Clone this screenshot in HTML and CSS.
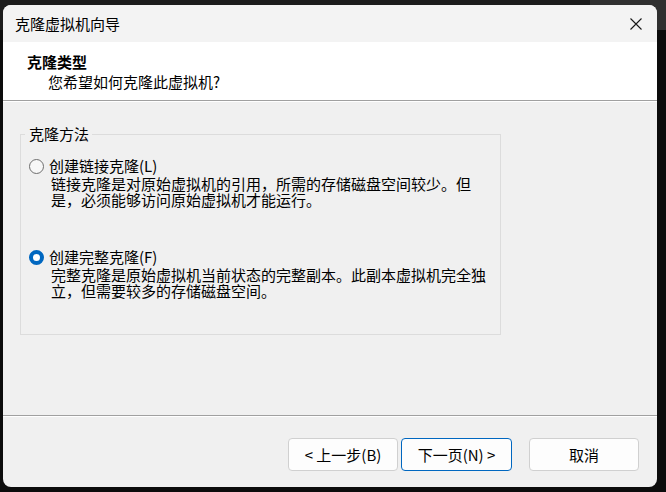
FILE: index.html
```html
<!DOCTYPE html>
<html lang="zh-CN">
<head>
<meta charset="utf-8">
<title>克隆虚拟机向导</title>
<link rel="stylesheet" href="styles.css">
</head>
<body>
<div class="window">
  <div class="titlebar">
    <span class="title">克隆虚拟机向导</span>
    <svg class="close" width="12" height="12" viewBox="0 0 12 12"><path d="M0.5 0.5 L11.5 11.5 M11.5 0.5 L0.5 11.5" stroke="#1a1a1a" stroke-width="1.1" fill="none"/></svg>
  </div>
  <div class="header">
    <div class="h-title">克隆类型</div>
    <div class="h-sub">您希望如何克隆此虚拟机?</div>
  </div>
  <div class="content">
    <fieldset class="group">
      <legend class="legend">克隆方法</legend>
      <div class="options">
        <div class="option">
          <div class="opt-row"><span class="radio"></span><span class="opt-label">创建链接克隆(L)</span></div>
          <p class="desc">链接克隆是对原始虚拟机的引用，所需的存储磁盘空间较少。但是，必须能够访问原始虚拟机才能运行。</p>
        </div>
        <div class="option option-second">
          <div class="opt-row"><span class="radio radio-on"></span><span class="opt-label">创建完整克隆(F)</span></div>
          <p class="desc">完整克隆是原始虚拟机当前状态的完整副本。此副本虚拟机完全独立，但需要较多的存储磁盘空间。</p>
        </div>
      </div>
    </fieldset>
  </div>
  <div class="footer">
    <button class="btn">&lt; 上一步(B)</button>
    <button class="btn btn-primary">下一页(N) &gt;</button>
    <button class="btn btn-cancel">取消</button>
  </div>
</div>
</body>
</html>
```
FILE: styles.css
```css
* { box-sizing: border-box; }
html, body { margin: 0; padding: 0; }
body {
  width: 666px;
  height: 492px;
  overflow: hidden;
  background: linear-gradient(to right, #1c1c1c 590px, #303030 590px) top left / 100% 30px no-repeat, #0c0c0c;
  font-family: "Noto Sans CJK SC", "Noto Sans", sans-serif;
  color: #000;
  padding: 5px 0 0 3px;
}
.window {
  width: 654px;
  height: 482px;
  border-radius: 8px;
  overflow: hidden;
  background: #f0f0f0;
  display: flex;
  flex-direction: column;
}
.titlebar {
  height: 37px;
  background: #f3f3f3;
  display: flex;
  align-items: center;
  padding: 0 15px 0 12px;
}
.title {
  font-size: 15px;
  line-height: 20px;
}
.close { margin-left: auto; }
.header {
  height: 59px;
  background: #fff;
  border-bottom: 1px solid #a0a0a0;
  padding: 10px 0 0 24px;
}
.h-title {
  font-size: 15px;
  line-height: 20px;
  font-weight: 700;
}
.h-sub {
  font-size: 15px;
  line-height: 20px;
  margin-left: 21px;
}
.content {
  flex: 1;
  border-top: 1px solid #ffffff;
  padding: 24px 0 0 17px;
}
.group {
  margin: 0;
  width: 481px;
  height: 209px;
  border: 1px solid #dcdcdc;
  padding: 15px 0 0 4px;
}
.legend {
  padding: 0 3px 0 4px;
  font-size: 15px;
  line-height: 16px;
}
.options { margin-left: 4px; }
.opt-row {
  display: flex;
  align-items: center;
  height: 18px;
  font-size: 15px;
  line-height: 18px;
}
.radio {
  width: 15px;
  height: 15px;
  border-radius: 50%;
  border: 1px solid #6e6e6e;
  background: #f7f7f7;
  margin-right: 5px;
  flex: none;
}
.radio-on {
  border: 4px solid #0067c0;
  background: #fff;
}
.desc {
  margin: 1px 0 0 22px;
  width: 440px;
  font-size: 15px;
  line-height: 16px;
}
.option-second { margin-top: 40px; }
.footer {
  height: 72px;
  border-top: 1px solid #a0a0a0;
  box-shadow: inset 0 1px 0 #ffffff;
  padding: 22px 18px 0 0;
  display: flex;
  justify-content: flex-end;
  align-items: flex-start;
}
.btn {
  width: 110px;
  height: 33px;
  border: 1px solid #d0d0d0;
  border-radius: 4px;
  background: #fdfdfd;
  font-family: "Noto Sans CJK SC", "Noto Sans", sans-serif;
  font-size: 15px;
  color: #000;
  padding: 0;
  margin: 0;
}
.btn-primary {
  width: 111px;
  margin-left: 3px;
  border-color: #0067c0;
}
.btn-cancel { margin-left: 17px; }
```
